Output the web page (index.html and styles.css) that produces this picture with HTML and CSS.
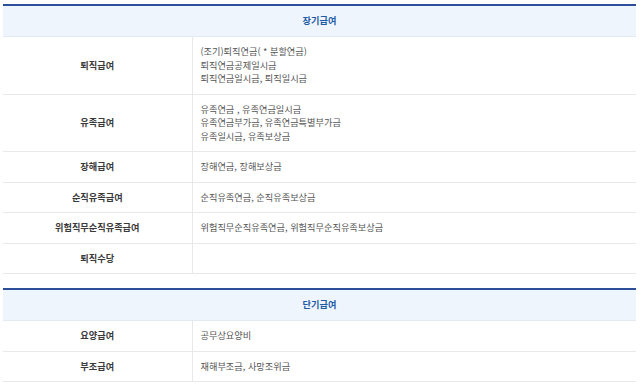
FILE: index.html
```html
<!DOCTYPE html>
<html lang="ko">
<head>
<meta charset="utf-8">
<link rel="stylesheet" href="styles.css">
</head>
<body>
<div class="wrap">
  <table class="tbl">
    <colgroup><col class="c1"><col class="c2"></colgroup>
    <thead>
      <tr><th colspan="2">장기급여</th></tr>
    </thead>
    <tbody>
      <tr><td class="lbl">퇴직급여</td><td class="val">(조기)퇴직연금( * 분할연금)<br>퇴직연금공제일시금<br>퇴직연금일시금, 퇴직일시금</td></tr>
      <tr><td class="lbl">유족급여</td><td class="val">유족연금 , 유족연금일시금<br>유족연금부가금, 유족연금특별부가금<br>유족일시금, 유족보상금</td></tr>
      <tr><td class="lbl">장해급여</td><td class="val">장해연금, 장해보상금</td></tr>
      <tr><td class="lbl">순직유족급여</td><td class="val">순직유족연금, 순직유족보상금</td></tr>
      <tr><td class="lbl">위험직무순직유족급여</td><td class="val">위험직무순직유족연금, 위험직무순직유족보상금</td></tr>
      <tr><td class="lbl">퇴직수당</td><td class="val"></td></tr>
    </tbody>
  </table>
  <table class="tbl">
    <colgroup><col class="c1"><col class="c2"></colgroup>
    <thead>
      <tr><th colspan="2">단기급여</th></tr>
    </thead>
    <tbody>
      <tr><td class="lbl">요양급여</td><td class="val">공무상요양비</td></tr>
      <tr><td class="lbl">부조급여</td><td class="val">재해부조금, 사망조위금</td></tr>
    </tbody>
  </table>
</div>
</body>
</html>
```

FILE: styles.css
```css
html, body {
  margin: 0;
  padding: 0;
  background: #ffffff;
}
body {
  font-family: "Noto Sans CJK KR", "Noto Sans", sans-serif;
  font-size: 9.2px;
  color: #555555;
}
.wrap {
  padding: 4px 4px 0 3px;
}
.tbl {
  width: 633px;
  border-collapse: collapse;
  border-top: 2px solid #2d4f9a;
  margin-bottom: 14px;
  table-layout: fixed;
}
.c1 {
  width: 189px;
}
.tbl th {
  background: #eef5fc;
  color: #1f5aa6;
  font-weight: 600;
  height: 30px;
  padding: 0;
  text-align: center;
  border-bottom: 1px solid #e3e9f0;
  line-height: 13.5px;
}
.tbl td {
  border-bottom: 1px solid #e8e8e8;
  padding: 8px 8px;
  line-height: 13.5px;
  vertical-align: middle;
}
.lbl {
  text-align: center;
  font-weight: 600;
  color: #3a3a3a;
  border-right: 1px solid #e8e8e8;
}
.val {
  text-align: left;
}
```
